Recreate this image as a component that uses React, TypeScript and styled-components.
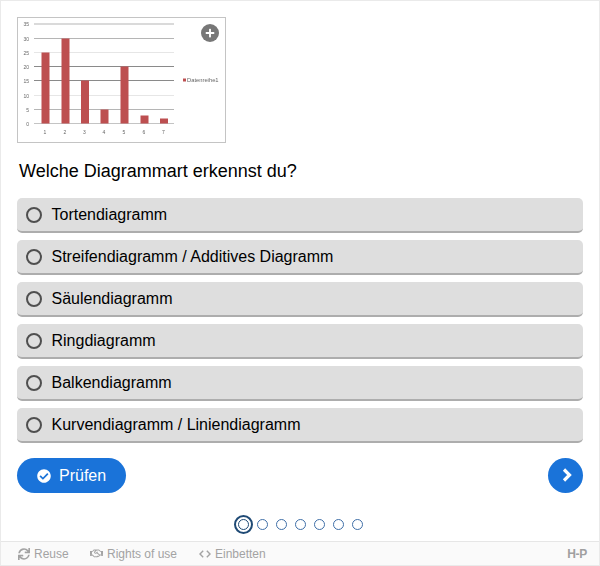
import React from "react";
import styled, { createGlobalStyle } from "styled-components";
import { FaSync, FaRegHandshake, FaCheckCircle, FaPlus } from "react-icons/fa";

const GlobalStyle = createGlobalStyle`
  html, body {
    margin: 0;
    padding: 0;
    background: #fff;
  }
`;

const StyledPage = styled.div`
  box-sizing: border-box;
  width: 600px;
  height: 566px;
  display: flex;
  flex-direction: column;
  border: 1px solid #eaeaea;
  font-family: "Liberation Sans", Arial, sans-serif;
  color: #000;
`;

const StyledContent = styled.div`
  display: flex;
  flex-direction: column;
  padding: 16px 16px 0;
`;

const StyledFigure = styled.div`
  position: relative;
  box-sizing: border-box;
  width: 209px;
  height: 126px;
  border: 1px solid #c4c4c4;
  background: #fff;
`;

const StyledChart = styled.svg`
  display: block;
  filter: blur(0.4px);
`;

const StyledZoom = styled.div`
  position: absolute;
  top: 6px;
  right: 6px;
  width: 18px;
  height: 18px;
  border-radius: 50%;
  background: #777;
  color: #fff;
  display: flex;
  align-items: center;
  justify-content: center;
  font-size: 10px;
`;

const StyledQuestion = styled.div`
  margin: 17px 0 16px 2px;
  font-size: 18px;
  line-height: 22px;
  color: #000;
`;

const StyledOptions = styled.div`
  display: flex;
  flex-direction: column;
  gap: 7px;
`;

const StyledOption = styled.div`
  box-sizing: border-box;
  height: 35px;
  display: flex;
  align-items: center;
  gap: 9.5px;
  padding: 0 8px 0 9px;
  background: #dedede;
  border-radius: 5px;
  border-bottom: 2px solid #adadad;
  font-size: 16px;
`;

const StyledRadio = styled.span`
  box-sizing: border-box;
  width: 16px;
  height: 16px;
  border: 2.5px solid #4f4f4f;
  border-radius: 50%;
`;

const StyledActions = styled.div`
  display: flex;
  justify-content: space-between;
  margin-top: 15px;
`;

const StyledCheckButton = styled.button`
  box-sizing: border-box;
  width: 109px;
  height: 35px;
  display: flex;
  align-items: center;
  gap: 8px;
  padding: 0 0 0 20px;
  border: 0;
  border-radius: 18px;
  background: #1a73d9;
  color: #fff;
  font-family: inherit;
  font-size: 16px;
`;

const StyledNextButton = styled.button`
  width: 35px;
  height: 35px;
  display: flex;
  align-items: center;
  justify-content: center;
  padding: 0 0 2px 2px;
  border: 0;
  border-radius: 50%;
  background: #1a73d9;
`;

const StyledDots = styled.div`
  display: flex;
  justify-content: center;
  margin-top: 22px;
`;

const StyledDotCell = styled.div`
  width: 19px;
  height: 18px;
  display: flex;
  align-items: center;
  justify-content: center;
`;

const StyledDot = styled.span<{ $current?: boolean }>`
  box-sizing: border-box;
  width: 11px;
  height: 11px;
  border: 1px solid #3f6fa8;
  border-radius: 50%;
  background: #fff;
  ${(props) => props.$current && "outline: 2px solid #1f4a75; outline-offset: 2px; border-color: #1f4a75;"}
`;

const StyledFooter = styled.div`
  box-sizing: border-box;
  margin-top: auto;
  height: 24px;
  display: flex;
  align-items: center;
  padding: 0 12px 0 17px;
  background: #fafafa;
  border-top: 1px solid #e6e6e6;
  color: #a3a3a3;
  font-size: 12px;
`;

const StyledFooterItem = styled.div<{ $width: number }>`
  width: ${(props) => props.$width}px;
  display: flex;
  align-items: center;
  gap: 4px;
`;

const StyledLogo = styled.div`
  margin-left: auto;
  font-size: 12px;
  font-weight: bold;
  letter-spacing: -0.3px;
  color: #a0a0a0;
`;

const options = [
  "Tortendiagramm",
  "Streifendiagramm / Additives Diagramm",
  "Säulendiagramm",
  "Ringdiagramm",
  "Balkendiagramm",
  "Kurvendiagramm / Liniendiagramm",
];

// y of each gridline, with its label and how dark it came out in the scaled image
const gridLines = [
  { y: 6, label: "35", color: "#b5b5b5" },
  { y: 20.5, label: "30", color: "#b5b5b5" },
  { y: 34.5, label: "25", color: "#e6e6e6" },
  { y: 48.5, label: "20", color: "#8a8a8a" },
  { y: 62.5, label: "15", color: "#8a8a8a" },
  { y: 77.5, label: "10", color: "#e6e6e6" },
  { y: 91.5, label: "5", color: "#b5b5b5" },
  { y: 105.5, label: "0", color: "#c4c4c4" },
];

const bars = [
  { x: 23.5, top: 34.5 },
  { x: 43.5, top: 20.5 },
  { x: 63, top: 62.5 },
  { x: 82.5, top: 91.5 },
  { x: 102.5, top: 48.5 },
  { x: 122.5, top: 97.5 },
  { x: 142, top: 100.5 },
];

const Chart = (): JSX.Element => (
  <StyledChart width={207} height={124} viewBox="0 0 207 124">
    {gridLines.map((line) => (
      <React.Fragment key={line.label}>
        <line x1={16} x2={156} y1={line.y} y2={line.y} stroke={line.color} strokeWidth={1} />
        <text x={11} y={line.y + 2} fontSize={5} fill="#666" textAnchor="end" fontFamily="Liberation Sans">
          {line.label}
        </text>
      </React.Fragment>
    ))}
    {bars.map((bar, index) => (
      <React.Fragment key={bar.x}>
        <rect x={bar.x} y={bar.top} width={8} height={105.5 - bar.top} fill="#bd4f50" />
        <text x={bar.x + 3.5} y={116} fontSize={5} fill="#666" textAnchor="middle" fontFamily="Liberation Sans">
          {index + 1}
        </text>
      </React.Fragment>
    ))}
    <rect x={165} y={60.5} width={3} height={3} fill="#bd4f50" />
    <text x={169} y={64} fontSize={5.8} fill="#666" fontFamily="Liberation Sans">
      Datenreihe1
    </text>
  </StyledChart>
);

const CodeIcon = (): JSX.Element => (
  <svg width="12" height="8" viewBox="0 0 12 8" fill="none" stroke="#a3a3a3" strokeWidth="1.4">
    <path d="M4.2 0.8 1 4l3.2 3.2" />
    <path d="M7.8 0.8 11 4 7.8 7.2" />
  </svg>
);

const NextIcon = (): JSX.Element => (
  <svg width="10" height="14" viewBox="0 0 10 14" fill="none" stroke="#fff" strokeWidth="3.2">
    <path d="M2 1.5 7.5 7 2 12.5" />
  </svg>
);

const App = (): JSX.Element => {
  return (
    <React.Fragment>
      <GlobalStyle />
      <StyledPage>
        <StyledContent>
          <StyledFigure>
            <Chart />
            <StyledZoom>
              <FaPlus />
            </StyledZoom>
          </StyledFigure>
          <StyledQuestion>Welche Diagrammart erkennst du?</StyledQuestion>
          <StyledOptions>
            {options.map((option) => (
              <StyledOption key={option}>
                <StyledRadio />
                {option}
              </StyledOption>
            ))}
          </StyledOptions>
          <StyledActions>
            <StyledCheckButton>
              <FaCheckCircle size={14} />
              Prüfen
            </StyledCheckButton>
            <StyledNextButton>
              <NextIcon />
            </StyledNextButton>
          </StyledActions>
          <StyledDots>
            {[0, 1, 2, 3, 4, 5, 6].map((dot) => (
              <StyledDotCell key={dot}>
                <StyledDot $current={dot === 0} />
              </StyledDotCell>
            ))}
          </StyledDots>
        </StyledContent>
        <StyledFooter>
          <StyledFooterItem $width={72}>
            <FaSync size={12} />
            Reuse
          </StyledFooterItem>
          <StyledFooterItem $width={109}>
            <FaRegHandshake size={13} />
            Rights of use
          </StyledFooterItem>
          <StyledFooterItem $width={80}>
            <CodeIcon />
            Einbetten
          </StyledFooterItem>
          <StyledLogo>H-P</StyledLogo>
        </StyledFooter>
      </StyledPage>
    </React.Fragment>
  );
};

export default App;
